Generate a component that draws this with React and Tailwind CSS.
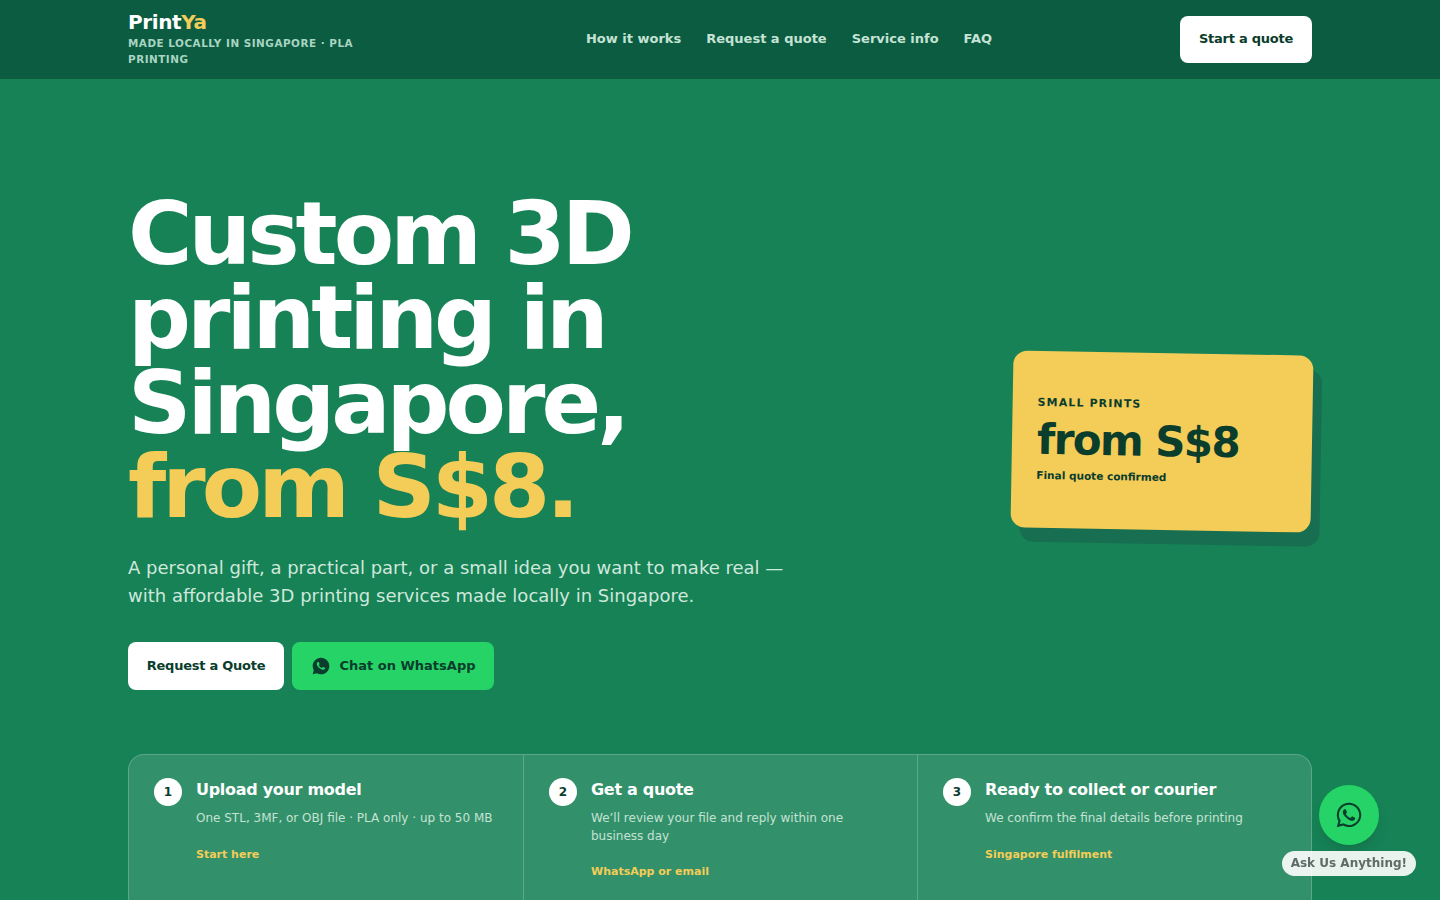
import React from 'react';
import { RiWhatsappFill } from 'react-icons/ri';
import { FaWhatsapp } from 'react-icons/fa';

const navLinks = ['How it works', 'Request a quote', 'Service info', 'FAQ'];

const steps = [
  { n: 1, title: 'Upload your model', body: 'One STL, 3MF, or OBJ file · PLA only · up to 50 MB', link: 'Start here' },
  { n: 2, title: 'Get a quote', body: 'We’ll review your file and reply within one business day', link: 'WhatsApp or email' },
  { n: 3, title: 'Ready to collect or courier', body: 'We confirm the final details before printing', link: 'Singapore fulfilment' },
];

const Header = () => (
  <header className="h-[79px] bg-[#0b5c41]">
    <div className="mx-auto flex h-full w-[1184px] items-center justify-between">
      <div className="mb-[2px] w-[270px]">
        <div className="text-[20px] leading-[24px] font-bold tracking-[-0.4px] text-white">
          Print<span className="text-[#f4cc58]">Ya</span>
        </div>
        <div className="mt-[1px] text-[10.4px] leading-[16px] font-bold tracking-[0.52px] text-[#a9d4c1]">
          MADE LOCALLY IN SINGAPORE · PLA PRINTING
        </div>
      </div>
      <nav className="mb-[2px] flex gap-[25px]">
        {navLinks.map((link) => (
          <a key={link} className="text-[13px] font-bold text-[#c5e3d5]">{link}</a>
        ))}
      </nav>
      <a className="flex h-[47px] w-[132px] items-center justify-center rounded-lg bg-white pb-[2px] text-[13px] font-bold tracking-[-0.25px] text-[#0a3d2c]">
        Start a quote
      </a>
    </div>
  </header>
);

const PriceCard = () => (
  <div className="relative mt-[2px] h-[177px] w-[300px] rotate-[1deg]">
    <div className="absolute left-[9px] top-[14px] h-full w-full rounded-[14px] bg-[#176e50]" />
    <div className="relative h-full w-full rounded-[14px] bg-[#f4cc58] pl-[25px] pt-[45px] text-[#0a3d2c]">
      <div className="text-[11px] leading-[14px] font-bold tracking-[1.1px]">SMALL PRINTS</div>
      <div className="mt-[4px] text-[42px] leading-[52px] font-bold tracking-[-1.6px]">from S$8</div>
      <div className="mt-[1px] text-[10.5px] leading-[16px] font-bold">Final quote confirmed</div>
    </div>
  </div>
);

const Hero = () => (
  <section className="mx-auto flex w-[1184px] items-center justify-between pt-[113px]">
    <div className="w-[700px]">
      <h1 className="text-[88px] leading-[84.48px] font-bold tracking-[-4px] text-white">
        Custom 3D<br />printing in<br />Singapore,<br /><span className="text-[#f4cc58]">from S$8.</span>
      </h1>
      <p className="mt-[24px] max-w-[670px] text-[18px] leading-[28px] text-[#cfe8dc]">
        A personal gift, a practical part, or a small idea you want to make real — with affordable 3D printing services made locally in Singapore.
      </p>
      <div className="mt-[32px] flex gap-2">
        <a className="flex h-12 w-[156px] items-center justify-center rounded-lg bg-white text-[13px] font-bold tracking-[-0.25px] text-[#0a3d2c]">
          Request a Quote
        </a>
        <a className="flex h-12 w-[202px] items-center justify-center gap-[8px] rounded-lg bg-[#25d366] text-[13px] font-bold text-[#0a3d2c]">
          <RiWhatsappFill className="ml-[1px] h-5 w-5" />
          Chat on WhatsApp
        </a>
      </div>
    </div>
    <PriceCard />
  </section>
);

const Steps = () => (
  <div className="mx-auto mt-[64px] grid w-[1184px] grid-cols-3 rounded-t-2xl border border-b-0 border-white/20 bg-white/[0.12]">
    {steps.map((step, i) => (
      <div key={step.n} className={`flex h-[190px] gap-[14px] pl-[25px] pt-[23px] ${i > 0 ? 'border-l border-white/20' : ''}`}>
        <div className="flex h-7 w-7 shrink-0 items-center justify-center rounded-full bg-white text-[12px] font-bold text-[#0a3d2c]">
          {step.n}
        </div>
        <div className="w-[300px]">
          <div className="text-[16px] leading-[24px] font-bold tracking-[-0.3px] text-white">{step.title}</div>
          <div className="mt-[8px] text-[12px] leading-[17.6px] text-[#c5e2d5]">{step.body}</div>
          <div className="mt-[18px] text-[11px] leading-[18px] font-bold text-[#f4cc58]">{step.link}</div>
        </div>
      </div>
    ))}
  </div>
);

const App = () => (
  <div className="h-screen overflow-hidden bg-[#168256] font-['DejaVu_Sans',sans-serif]">
    <Header />
    <Hero />
    <Steps />
    <div className="fixed bottom-[24px] right-[24px] flex flex-col items-center">
      <div className="flex h-[60px] w-[60px] items-center justify-center rounded-full bg-[#25d366] text-[#0a3d2c] shadow-lg">
        <FaWhatsapp className="h-[28px] w-[28px]" />
      </div>
      <div className="mt-[6px] rounded-full bg-white/90 px-[9px] py-[3px] text-[12px] leading-[19px] font-bold text-[#5f6b66]">
        Ask Us Anything!
      </div>
    </div>
  </div>
);

export default App;
